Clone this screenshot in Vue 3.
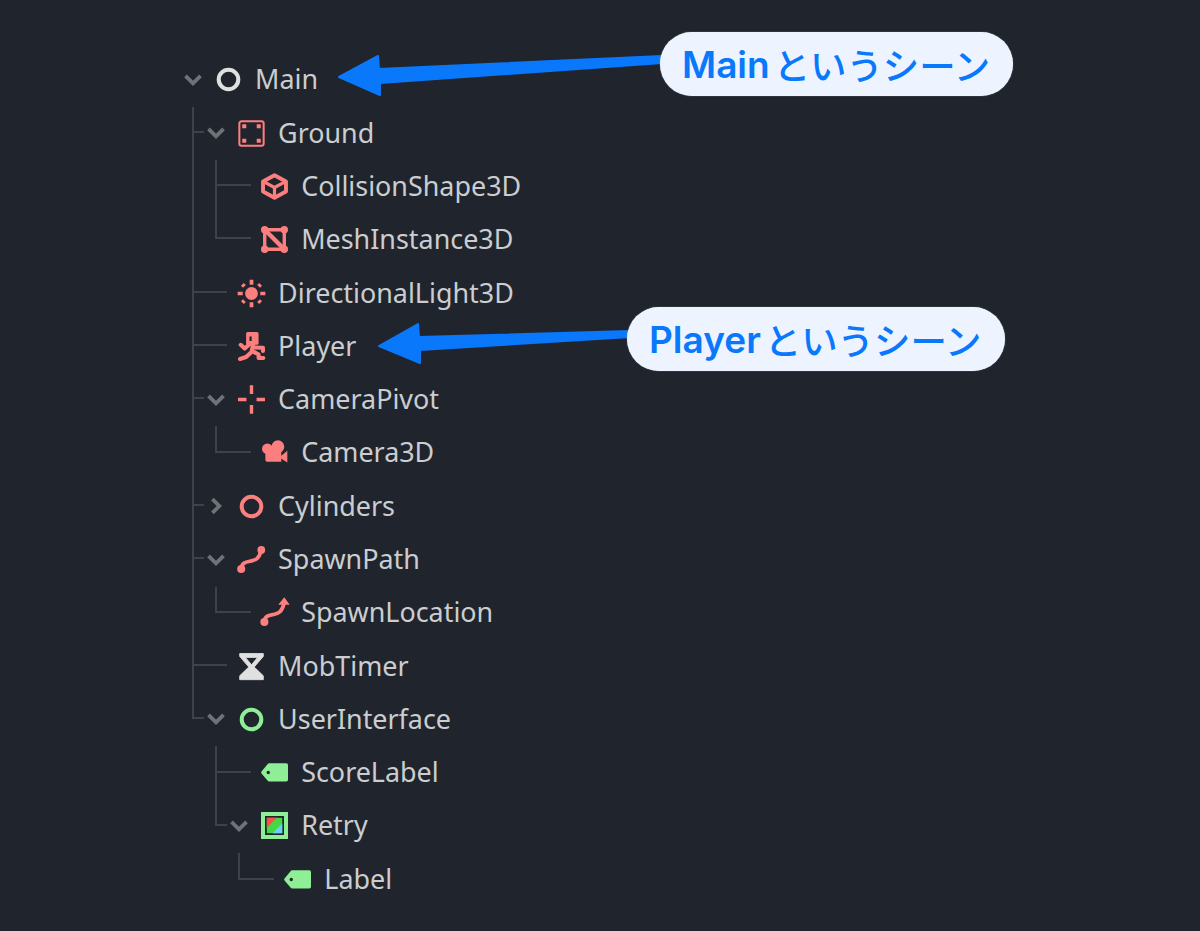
<script setup>
const RED = '#fc7f7f'
const GREEN = '#8eef97'
const WHITE = '#e0e0e0'

const ring = 'M8 1a7 7 0 1 0 0 14 7 7 0 1 0 0-14zm0 2.4a4.6 4.6 0 1 1 0 9.2 4.6 4.6 0 1 1 0-9.2z'
const tag = [
  { fill: GREEN, 'fill-rule': 'evenodd', d: 'M.3 8.6 4 12.9a1 1 0 0 0 .8.4H15a1 1 0 0 0 1-1V3.5a1 1 0 0 0-1-1H4.8a1 1 0 0 0-.8.4L.3 7.4a1 1 0 0 0 0 1.2zM4.3 7a1 1 0 1 1 0 2 1 1 0 1 1 0-2z' }
]

const icons = {
  mainRing: [{ fill: WHITE, 'fill-rule': 'evenodd', d: ring }],
  redRing: [{ fill: RED, 'fill-rule': 'evenodd', d: ring }],
  greenRing: [{ fill: GREEN, 'fill-rule': 'evenodd', d: ring }],
  body: [
    { fill: 'none', stroke: RED, 'stroke-width': 1.2, d: 'M2 .8h12a1.2 1.2 0 0 1 1.2 1.2v12a1.2 1.2 0 0 1-1.2 1.2H2A1.2 1.2 0 0 1 .8 14V2A1.2 1.2 0 0 1 2 .8z' },
    { fill: RED, d: 'M2.5 2.5h2.4v2.4H2.5zM11.1 2.5h2.4v2.4h-2.4zM2.5 11.1h2.4v2.4H2.5zM11.1 11.1h2.4v2.4h-2.4z' }
  ],
  cube: [
    { fill: 'none', stroke: RED, 'stroke-width': 2.3, 'stroke-linejoin': 'round', d: 'M8 1.3 14.8 5V11L8 14.7 1.2 11V5z' },
    { fill: 'none', stroke: RED, 'stroke-width': 1.9, 'stroke-linejoin': 'round', d: 'M1.2 5 8 8.6 14.8 5M8 8.6V14.7' }
  ],
  mesh: [
    { fill: 'none', stroke: RED, 'stroke-width': 2, d: 'M2.2 2.2H13.8V13.8H2.2z' },
    { fill: 'none', stroke: RED, 'stroke-width': 2.6, d: 'M2.2 2.2 13.8 13.8' },
    { fill: RED, d: 'M2.2 0a2.2 2.2 0 1 0 0 4.4 2.2 2.2 0 1 0 0-4.4zM13.8 0a2.2 2.2 0 1 0 0 4.4 2.2 2.2 0 1 0 0-4.4zM2.2 11.6a2.2 2.2 0 1 0 0 4.4 2.2 2.2 0 1 0 0-4.4zM13.8 11.6a2.2 2.2 0 1 0 0 4.4 2.2 2.2 0 1 0 0-4.4z' }
  ],
  sun: [
    { fill: RED, d: 'M8 4.2a3.8 3.8 0 1 0 0 7.6 3.8 3.8 0 1 0 0-7.6z' },
    { fill: 'none', stroke: RED, 'stroke-width': 2.2, d: 'M8 -.2V2.8M8 13.2V16.2M-.2 8H2.8M13.2 8H16.2' },
    { fill: 'none', stroke: RED, 'stroke-width': 2.4, d: 'M2.6 2.6 3.8 3.8M12.2 12.2 13.4 13.4M2.6 13.4 3.8 12.2M12.2 3.8 13.4 2.6' }
  ],
  player: [
    { fill: RED, 'fill-rule': 'evenodd', d: 'M5.8 -.6H11.2A1 1 0 0 1 12.2 .4V6A1 1 0 0 1 11.2 7H5.8A1 1 0 0 1 4.8 6V.4A1 1 0 0 1 5.8 -.6ZM6.8 2V4.8H8.1V2Z' },
    { fill: 'none', stroke: RED, 'stroke-width': 2.4, 'stroke-linejoin': 'round', 'stroke-linecap': 'round', d: 'M6.6 6.8 4 9.2 1.6 7M9 6.5 8 11.2 4.8 14.2 1.2 15.4M10 8.6 14.8 8.8V10.6M8.4 10.6 12.2 12.8V14.8H15' }
  ],
  pivot: [
    { fill: RED, d: 'M0 7H5V9H0zM11 7H16V9H11zM7 -.4H9V4.8H7zM7 11.2H9V16.4H7z' }
  ],
  camera: [
    { fill: RED, d: 'M3.8 2.6a3.2 3.2 0 1 0 0 6.4 3.2 3.2 0 1 0 0-6.4z' },
    { fill: RED, d: 'M10 .8a3.8 3.8 0 1 0 0 7.6 3.8 3.8 0 1 0 0-7.6z' },
    { fill: RED, d: 'M2.6 6.5H12V13.5H3.6A1 1 0 0 1 2.6 12.5z' },
    { fill: RED, d: 'M11.8 10 15.6 7V13.9L11.8 11.6z' }
  ],
  path: [
    { fill: 'none', stroke: RED, 'stroke-width': 2.2, 'stroke-linecap': 'round', d: 'M1.9 13.6C2 9.5 5.5 9.4 8 8.8S12.6 7.5 13.8 2.4' },
    { fill: RED, d: 'M1.9 11.2a2.4 2.4 0 1 0 0 4.8 2.4 2.4 0 1 0 0-4.8zM13.8 0a2.3 2.3 0 1 0 0 4.6 2.3 2.3 0 1 0 0-4.6z' }
  ],
  spawn: [
    { fill: 'none', stroke: RED, 'stroke-width': 2.2, d: 'M2 13.6C2 9.6 5.5 9.6 8 9S12.4 7.6 13.6 2.8' },
    { fill: RED, d: 'M2 11.2a2.4 2.4 0 1 0 0 4.8 2.4 2.4 0 1 0 0-4.8zM13.8 -1 10.2 3.4H17z' }
  ],
  hourglass: [
    { fill: WHITE, 'fill-rule': 'evenodd', stroke: WHITE, 'stroke-width': .5, 'stroke-linejoin': 'round', d: 'M1 .3H15V2L9.6 8.3 15 13.5V15.8H1V13.5L6.4 8.3 1 2ZM4.4 2.6H11.6L8 7Z' }
  ],
  label: tag,
  texture: [
    { fill: GREEN, d: 'M0 0H16V16H0z' },
    { fill: '#1a1c20', d: 'M2.4 2.4H13.6V13.6H2.4z' },
    { fill: '#45d745', d: 'M3.4 3.4H12.6V12.6H3.4z' },
    { fill: '#ff4d4d', d: 'M3.4 3.4H9.4L3.4 9.4z' },
    { fill: '#6cd0ff', d: 'M12.6 6.8V12.6H6.8z' }
  ]
}

const rows = [
  { name: 'Main', depth: 0, chevron: 'down', icon: 'mainRing' },
  { name: 'Ground', depth: 1, chevron: 'down', icon: 'body' },
  { name: 'CollisionShape3D', depth: 2, icon: 'cube' },
  { name: 'MeshInstance3D', depth: 2, icon: 'mesh' },
  { name: 'DirectionalLight3D', depth: 1, icon: 'sun' },
  { name: 'Player', depth: 1, icon: 'player' },
  { name: 'CameraPivot', depth: 1, chevron: 'down', icon: 'pivot' },
  { name: 'Camera3D', depth: 2, icon: 'camera' },
  { name: 'Cylinders', depth: 1, chevron: 'right', icon: 'redRing' },
  { name: 'SpawnPath', depth: 1, chevron: 'down', icon: 'path' },
  { name: 'SpawnLocation', depth: 2, icon: 'spawn' },
  { name: 'MobTimer', depth: 1, icon: 'hourglass' },
  { name: 'UserInterface', depth: 1, chevron: 'down', icon: 'greenRing' },
  { name: 'ScoreLabel', depth: 2, icon: 'label' },
  { name: 'Retry', depth: 2, chevron: 'down', icon: 'texture' },
  { name: 'Label', depth: 3, icon: 'label' }
]

const guides = [
  'M193 107V718H204',
  'M193 132H204M193 292H227M193 345H227M193 398H204M193 505H204M193 558H204M193 665H227',
  'M216 160V238H251M216 185H251',
  'M216 426V452H251',
  'M216 587V612H251',
  'M216 746V825H227M216 772H251',
  'M239 853V879H274'
]

const notes = [
  { text: 'Main', cls: 'note-main' },
  { text: 'Player', cls: 'note-player' }
]
</script>

<template>
  <div class="page">
    <div class="tree">
      <div
        v-for="row in rows"
        :key="row.name + row.depth"
        class="row"
        :style="{ paddingLeft: 181 + row.depth * 23.1 + 'px' }"
      >
        <span class="chevron">
          <svg v-if="row.chevron === 'down'" viewBox="0 0 16 16" width="24" height="24">
            <path d="M3 5.2 8 10.2 13 5.2" />
          </svg>
          <svg v-else-if="row.chevron === 'right'" viewBox="0 0 16 16" width="24" height="24">
            <path d="M5.6 3.4 10.2 8 5.6 12.6" />
          </svg>
        </span>
        <svg class="icon" viewBox="0 0 16 16" width="27" height="27">
          <path v-for="(p, i) in icons[row.icon]" :key="i" v-bind="p" />
        </svg>
        <span class="name">{{ row.name }}</span>
      </div>
    </div>

    <svg class="guides" width="1200" height="931">
      <path v-for="(d, i) in guides" :key="i" :d="d" />
    </svg>

    <svg class="arrows" width="1200" height="931">
      <polygon points="339,77 378,56 379,69 662,56 662,63 380,83 380,95" />
      <polygon points="379,346 418,324 419,337 630,331 630,337 420,350 420,363" />
    </svg>

    <div v-for="n in notes" :key="n.text" class="note" :class="n.cls">
      <span class="latin">{{ n.text }}</span>
      <span class="kana">というシーン</span>
    </div>
  </div>
</template>

<style>
html, body {
  margin: 0;
  background: #20252d;
}
</style>

<style scoped>
.page {
  position: relative;
  width: 1200px;
  height: 931px;
  overflow: hidden;
  background: #20252d;
  font-family: "Noto Sans", sans-serif;
}
.tree {
  padding-top: 53.2px;
  display: flex;
  flex-direction: column;
}
.row {
  height: 53.3px;
  display: flex;
  align-items: center;
  box-sizing: border-box;
}
.chevron {
  width: 24px;
  height: 24px;
  flex: none;
  margin-right: 9.5px;
}
.chevron svg {
  display: block;
}
.chevron path {
  fill: none;
  stroke: #6f7277;
  stroke-width: 2.5;
}
.icon {
  flex: none;
  overflow: visible;
  margin-right: 13.5px;
}
.name {
  font-size: 26.9px;
  color: #cbcdd0;
  white-space: nowrap;
  padding-bottom: 2px;
}
.guides {
  position: absolute;
  left: 0;
  top: 0;
}
.guides path {
  fill: none;
  stroke: #3f4349;
  stroke-width: 2;
}
.arrows {
  position: absolute;
  left: 0;
  top: 0;
}
.arrows polygon {
  fill: #0a78fb;
  stroke: #0a78fb;
  stroke-width: 2;
  stroke-linejoin: round;
}
.note {
  position: absolute;
  height: 64px;
  box-sizing: border-box;
  border-radius: 32px;
  background: #edf4ff;
  box-shadow: 0 0 1px rgba(255, 255, 255, 0.7);
  display: flex;
  align-items: center;
  gap: 4px;
  padding: 0 22px;
  color: #0a78fb;
  white-space: nowrap;
}
.note-main {
  left: 660px;
  top: 32px;
  width: 353px;
}
.note-player {
  left: 627px;
  top: 307px;
  width: 378px;
}
.latin {
  font-family: Inter, sans-serif;
  font-weight: 600;
  font-size: 37px;
  letter-spacing: 0;
}
.kana {
  font-family: "Noto Sans CJK JP", sans-serif;
  font-weight: 500;
  font-size: 36.4px;
}
</style>
